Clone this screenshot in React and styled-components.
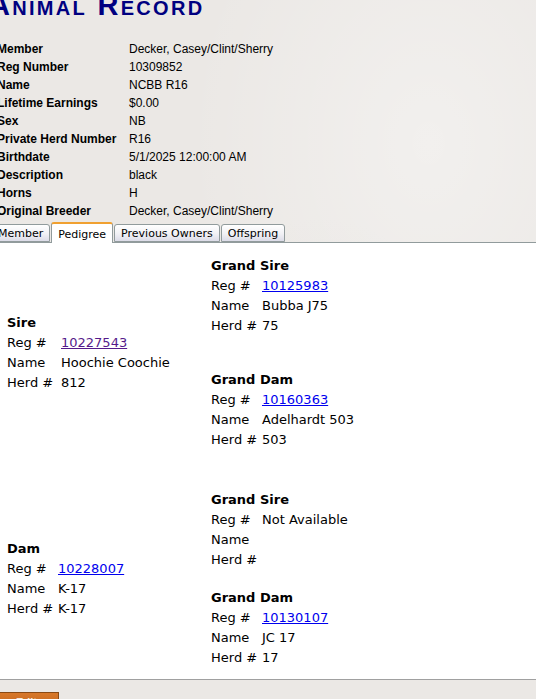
import React from "react";
import styled, { createGlobalStyle } from "styled-components";

const GlobalStyle = createGlobalStyle`
  html, body { margin: 0; padding: 0; }
  body {
    background: #ebe8e5;
    background-image:
      radial-gradient(ellipse at 80% 20%, rgba(255,255,255,0.35), transparent 40%),
      radial-gradient(ellipse at 60% 60%, rgba(200,195,190,0.18), transparent 35%);
    overflow: hidden;
    font-family: "Liberation Sans", Arial, sans-serif;
  }
`;

const Page = styled.div`
  margin-left: -3px;
  width: 600px;
`;

const Title = styled.h1`
  margin: -9px 0 0 -8px;
  font-family: "Liberation Sans", Arial, sans-serif;
  font-size: 29px;
  line-height: 28px;
  font-weight: bold;
  font-variant: small-caps;
  color: #000080;
  letter-spacing: 2.3px;
  white-space: nowrap;
`;

const InfoGrid = styled.div`
  margin-top: 21px;
  display: grid;
  grid-template-columns: 132px 1fr;
  grid-auto-rows: 18px;
  font-size: 12px;
  line-height: 18px;
  color: #000;
`;

const InfoLabel = styled.div`
  font-weight: bold;
  white-space: nowrap;
`;

const InfoValue = styled.div`
  white-space: nowrap;
`;

const TabStrip = styled.div`
  display: flex;
  align-items: flex-end;
  gap: 1px;
  height: 22px;
  margin-left: -6px;
  border-bottom: 1px solid #919b9c;
  font-family: "DejaVu Sans", Verdana, sans-serif;
  font-size: 11px;
`;

const Tab = styled.div`
  box-sizing: border-box;
  height: ${(p) => (p.$active ? "21px" : "18px")};
  margin-bottom: ${(p) => (p.$active ? "-1px" : "0")};
  padding: 0 6px;
  display: flex;
  align-items: center;
  padding-top: ${(p) => (p.$active ? "2px" : "0")};
  border: 1px solid #919b9c;
  border-bottom: ${(p) => (p.$active ? "none" : "1px solid #919b9c")};
  border-top: ${(p) => (p.$active ? "2px solid #f0a030" : "1px solid #919b9c")};
  border-radius: 3px 3px 0 0;
  background: ${(p) =>
    p.$active ? "#ffffff" : "linear-gradient(#ffffff 0%, #f1f1f5 55%, #dcdce8 100%)"};
  color: #000;
  white-space: nowrap;
  cursor: default;
`;

const Panel = styled.div`
  background: #fff;
  border-bottom: 1px solid #a0a0a0;
  padding: 13px 0 11px 13px;
  font-family: "DejaVu Sans", Verdana, sans-serif;
  font-size: 13px;
  line-height: 20px;
  color: #000;
  height: 437px;
  box-sizing: border-box;
  margin-left: -3px;
`;

const Section = styled.div`
  display: grid;
  grid-template-columns: 204px 1fr;
  align-items: center;
  margin-top: ${(p) => p.$top || 0}px;
`;

const GrandColumn = styled.div`
  display: flex;
  flex-direction: column;
  gap: ${(p) => p.$gap}px;
`;

const Block = styled.div`
  display: flex;
  flex-direction: column;
`;

const BlockTitle = styled.div`
  font-weight: bold;
  height: 20px;
`;

const Line = styled.div`
  display: flex;
  height: 20px;
  white-space: nowrap;
`;

const LineLabel = styled.span`
  width: ${(p) => p.$w}px;
  flex: none;
`;

const RegLink = styled.a`
  color: ${(p) => (p.$visited ? "#551a8b" : "#0000ee")};
  text-decoration: underline;
`;

const Footer = styled.div`
  padding-top: 12px;
`;

const EditButton = styled.button`
  margin-left: -3px;
  width: 65px;
  height: 24px;
  border: 1px solid #8a4a14;
  background: linear-gradient(#d8782a, #b85e18);
  color: #f3e6d8;
  font-family: "Liberation Sans", Arial, sans-serif;
  font-size: 11px;
  font-weight: bold;
  padding: 3px 0 0;
  display: flex;
  justify-content: center;
`;

function PedBlock({ title, reg, name, herd, w, visited, link = true }) {
  return (
    <Block>
      <BlockTitle>{title}</BlockTitle>
      <Line>
        <LineLabel $w={w}>Reg #</LineLabel>
        {link ? <RegLink href="#" $visited={visited}>{reg}</RegLink> : <span>{reg}</span>}
      </Line>
      <Line>
        <LineLabel $w={w}>Name</LineLabel>
        <span>{name}</span>
      </Line>
      <Line>
        <LineLabel $w={w}>Herd #</LineLabel>
        <span>{herd}</span>
      </Line>
    </Block>
  );
}

const info = [
  ["Member", "Decker, Casey/Clint/Sherry"],
  ["Reg Number", "10309852"],
  ["Name", "NCBB R16"],
  ["Lifetime Earnings", "$0.00"],
  ["Sex", "NB"],
  ["Private Herd Number", "R16"],
  ["Birthdate", "5/1/2025 12:00:00 AM"],
  ["Description", "black"],
  ["Horns", "H"],
  ["Original Breeder", "Decker, Casey/Clint/Sherry"],
];

export default function App() {
  return (
    <>
      <GlobalStyle />
      <Page>
        <Title>Animal Record</Title>
        <InfoGrid>
          {info.map(([k, v]) => (
            <React.Fragment key={k}>
              <InfoLabel>{k}</InfoLabel>
              <InfoValue>{v}</InfoValue>
            </React.Fragment>
          ))}
        </InfoGrid>
        <TabStrip>
          <Tab>Member</Tab>
          <Tab $active>Pedigree</Tab>
          <Tab>Previous Owners</Tab>
          <Tab>Offspring</Tab>
        </TabStrip>
        <Panel>
          <Section>
            <PedBlock title="Sire" reg="10227543" name="Hoochie Coochie" herd="812" w={54} visited />
            <GrandColumn $gap={34}>
              <PedBlock title="Grand Sire" reg="10125983" name="Bubba J75" herd="75" w={51} />
              <PedBlock title="Grand Dam" reg="10160363" name="Adelhardt 503" herd="503" w={51} />
            </GrandColumn>
          </Section>
          <Section $top={40}>
            <PedBlock title="Dam" reg="10228007" name="K-17" herd="K-17" w={51} />
            <GrandColumn $gap={18}>
              <PedBlock title="Grand Sire" reg="Not Available" name="" herd="" w={51} link={false} />
              <PedBlock title="Grand Dam" reg="10130107" name="JC 17" herd="17" w={51} />
            </GrandColumn>
          </Section>
        </Panel>
        <Footer>
          <EditButton>Edit</EditButton>
        </Footer>
      </Page>
    </>
  );
}
